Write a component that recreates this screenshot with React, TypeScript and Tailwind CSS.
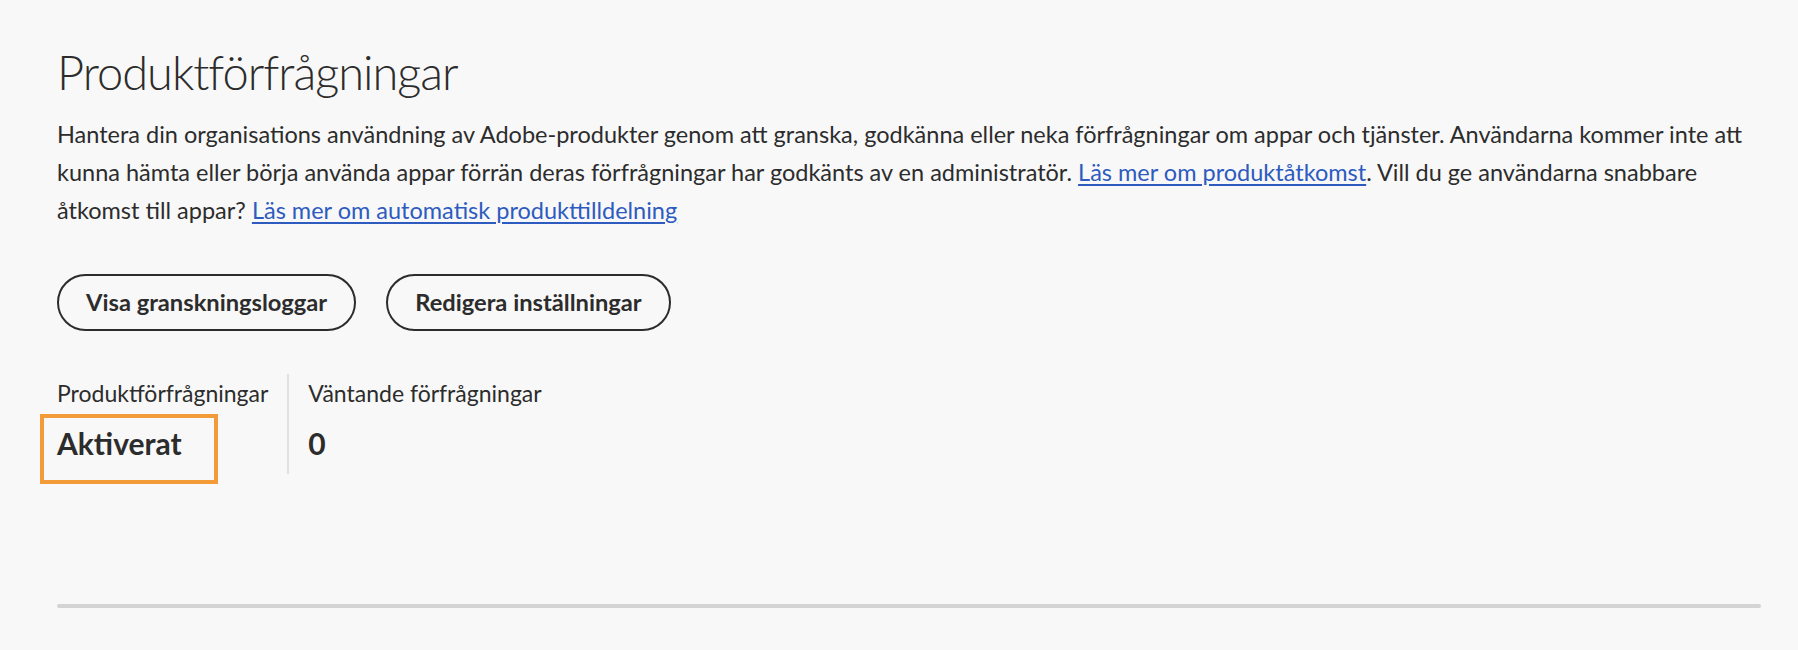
import React from "react";

export default function App() {
  return (
    <div className="min-h-[650px] w-full bg-[#f8f8f8] text-[#2c2c2c]" style={{ fontFamily: "Lato, 'Open Sans', sans-serif" }}>
      <div className="pl-[57px] pr-[38px] pt-[43px]">
        <h1 className="text-[47px] leading-[58px] font-light tracking-[-1px]">Produktförfrågningar</h1>
        <p className="mt-[14px] text-[23.5px] leading-[38px] whitespace-nowrap">
          Hantera din organisations användning av Adobe-produkter genom att granska, godkänna eller neka förfrågningar om appar och tjänster. Användarna kommer inte att
          <br />
          kunna hämta eller börja använda appar förrän deras förfrågningar har godkänts av en administratör.{" "}
          <a href="#" className="text-[#2d5bbf] underline underline-offset-[3px]">Läs mer om produktåtkomst</a>. Vill du ge användarna snabbare
          <br />
          åtkomst till appar?{" "}
          <a href="#" className="text-[#2d5bbf] underline underline-offset-[3px]">Läs mer om automatisk produkttilldelning</a>
        </p>
        <div className="mt-[45px] flex gap-[30px]">
          <button className="h-[57px] rounded-full border-2 border-[#2c2c2c] px-[27px] text-[23.7px] font-bold text-[#2c2c2c]">Visa granskningsloggar</button>
          <button className="h-[57px] rounded-full border-2 border-[#2c2c2c] px-[27px] text-[23.7px] font-bold text-[#2c2c2c]">Redigera inställningar</button>
        </div>
        <div className="mt-[43px] flex">
          <div className="relative border-r-2 border-[#e1e1e1] pr-[19px] pt-[5px] pb-[12px]">
            <div className="text-[23px] leading-[28px]">Produktförfrågningar</div>
            <div className="mt-[17px] text-[30px] leading-[38px] font-bold">Aktiverat</div>
            <div className="pointer-events-none absolute left-[-17px] top-[40px] h-[70px] w-[178px] border-4 border-[#f29b38]"></div>
          </div>
          <div className="pl-[19px] pt-[5px]">
            <div className="text-[23px] leading-[28px]">Väntande förfrågningar</div>
            <div className="mt-[17px] text-[30px] leading-[38px] font-bold">0</div>
          </div>
        </div>
        <div className="mt-[130px] h-[4px] w-[1704px] rounded-full bg-[#d4d4d4]"></div>
      </div>
    </div>
  );
}
